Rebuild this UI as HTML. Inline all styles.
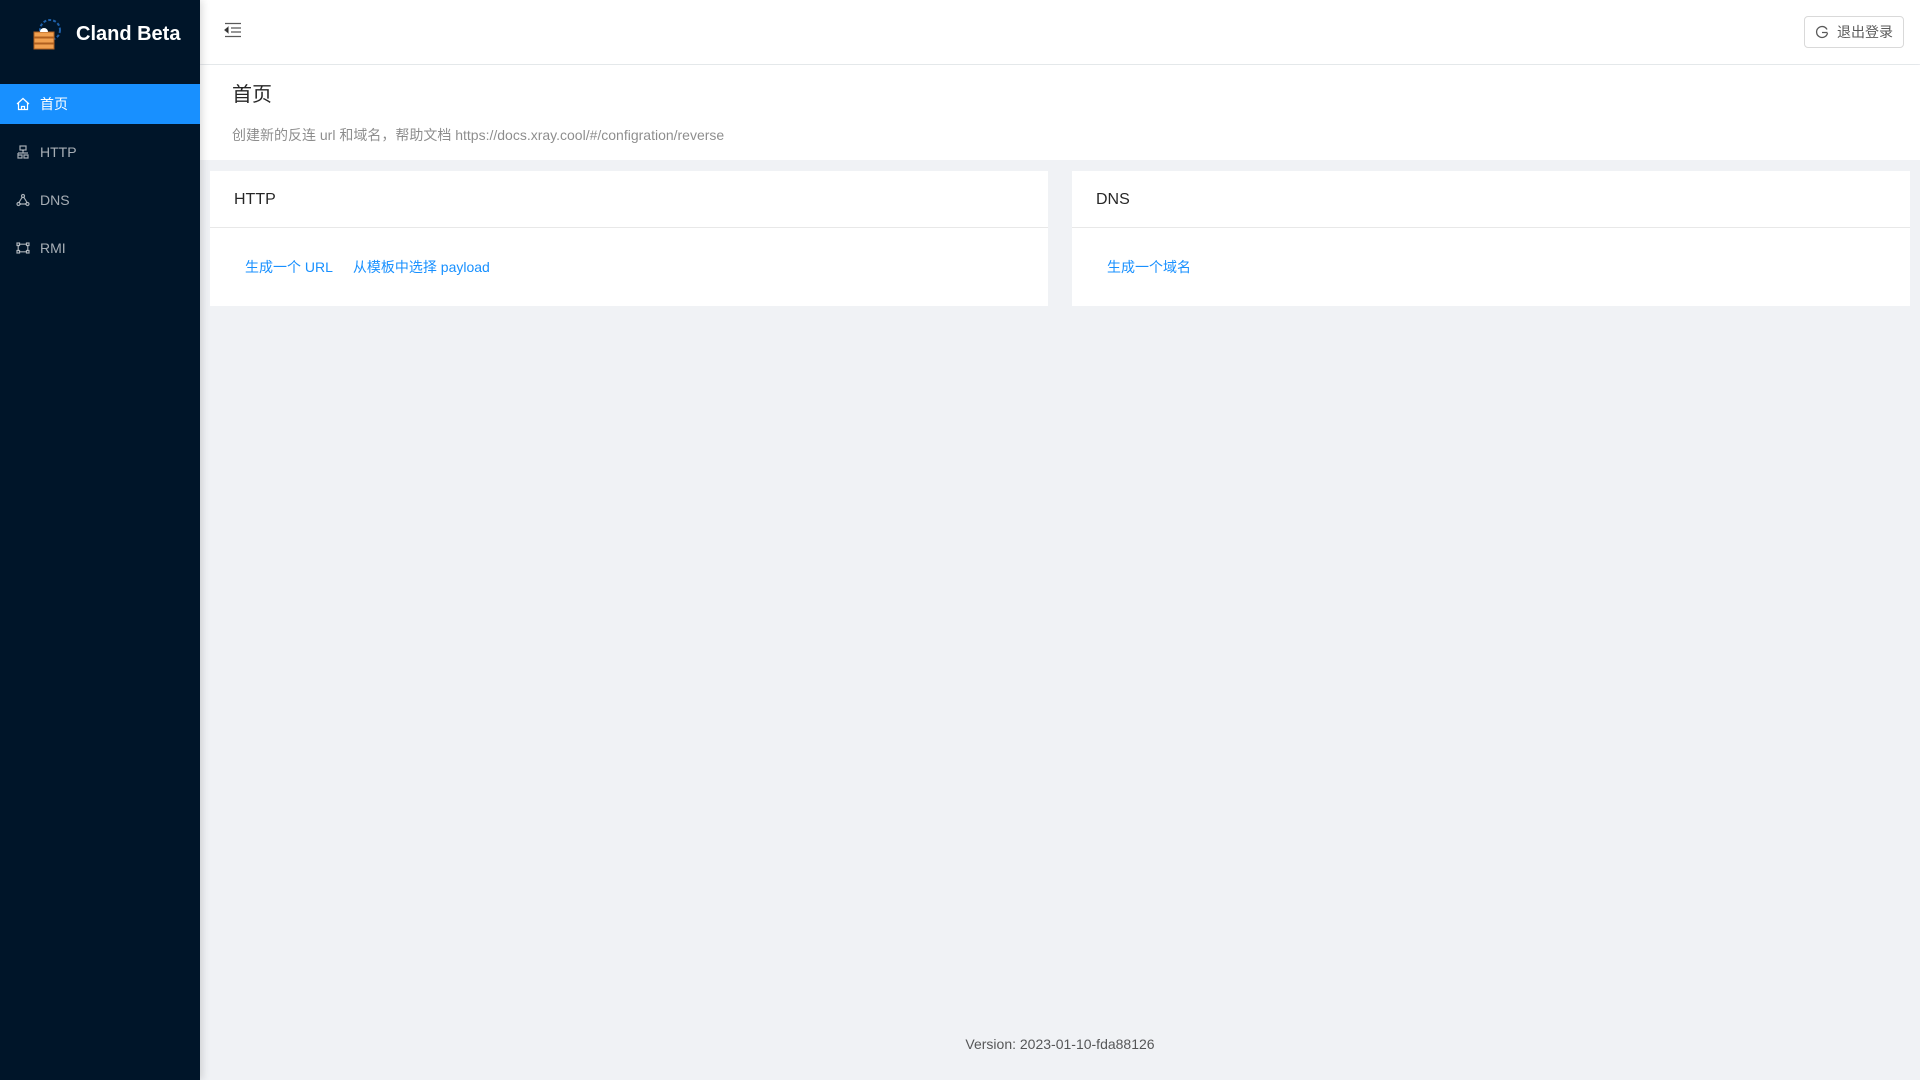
<!DOCTYPE html><html><head><meta charset="utf-8"><style>
*{box-sizing:border-box;margin:0;padding:0}
body{width:1920px;height:1080px;background:#f0f2f5;font-family:"Liberation Sans","Noto Sans CJK SC",sans-serif;font-size:14px;color:rgba(0,0,0,.85);position:relative;overflow:hidden}
.side{position:absolute;left:0;top:0;width:200px;height:1080px;background:#001529;box-shadow:2px 0 8px rgba(0,0,0,.15);z-index:2}
.logo{position:absolute;left:32px;top:17px;height:34px;display:flex;align-items:center}
.logo span{color:#fff;font-weight:bold;font-size:20px;margin-left:12px}
.mi{position:absolute;left:0;width:200px;height:40px;display:flex;align-items:center;padding-left:16px;color:rgba(255,255,255,.65);font-size:14px}
.mi svg{margin-right:10px}
.mi.a{background:#1890ff;color:#fff}
.hdr{position:absolute;left:200px;top:0;right:0;height:64px;background:#fff;box-shadow:0 1px 4px rgba(0,21,41,.08)}
.btn{position:absolute;right:16px;top:16px;width:100px;height:32px;border:1px solid #d9d9d9;border-radius:4px;display:flex;align-items:center;justify-content:center;color:rgba(0,0,0,.65);font-size:14px;background:#fff}
.ph{position:absolute;left:200px;top:65px;right:0;height:95px;background:#fff;padding:16px 32px}
.ph h1{font-size:20px;font-weight:normal;line-height:28px;margin-top:0}
.ph p{color:rgba(0,0,0,.45);margin-top:15px;line-height:22px}
.card{position:absolute;top:171px;width:838px;height:135px;background:#fff}
.card .t{height:57px;border-bottom:1px solid #e8e8e8;padding:0 24px;line-height:58px;font-size:16px}
.card .b{padding:0 35px;line-height:78px;color:#1890ff}
.card .b a{margin-right:20px}
.ft{position:absolute;left:200px;right:0;top:1036px;text-align:center;color:rgba(0,0,0,.65)}
</style></head><body>
<div class="side">
<div class="logo"><svg width="32" height="34" viewBox="0 0 32 34"><circle cx="18" cy="13" r="10" fill="none" stroke="#1e5fa8" stroke-width="2" stroke-dasharray="3 2"/><rect x="2" y="15" width="20" height="5" fill="#f0a050" stroke="#b06020"/><rect x="2" y="21" width="20" height="5" fill="#f0a050" stroke="#b06020"/><rect x="2" y="27" width="20" height="5" fill="#f0a050" stroke="#b06020"/><path d="M8 15a4 4 0 0 1 8 0" fill="#fff"/></svg><span>Cland Beta</span></div>
<div class="mi a" style="top:84px"><svg width="14" height="14" viewBox="0 0 14 14" fill="none" stroke="#fff" stroke-width="1.2"><path d="M1 7L7 1.5 13 7M2.5 6v6.5h9V6M5.5 12.5v-3h3v3"/></svg>首页</div>
<div class="mi" style="top:132px"><svg width="14" height="14" viewBox="0 0 14 14" fill="none" stroke="currentColor" stroke-width="1.2"><rect x="4" y="1" width="6" height="4"/><path d="M7 5v3M2 8h10M2 8v5h4V10H2M8 10h4v3H8z"/></svg>HTTP</div>
<div class="mi" style="top:180px"><svg width="14" height="14" viewBox="0 0 14 14" fill="none" stroke="currentColor" stroke-width="1.2"><circle cx="7" cy="3" r="1.5"/><circle cx="2.5" cy="11" r="1.5"/><circle cx="11.5" cy="11" r="1.5"/><path d="M6 4.5l-3 5M8 4.5l3 5M4 11h6"/></svg>DNS</div>
<div class="mi" style="top:228px"><svg width="14" height="14" viewBox="0 0 14 14" fill="none" stroke="currentColor" stroke-width="1.2"><rect x="1" y="2" width="2.5" height="2.5"/><rect x="10.5" y="2" width="2.5" height="2.5"/><rect x="1" y="9.5" width="2.5" height="2.5"/><rect x="10.5" y="9.5" width="2.5" height="2.5"/><path d="M3.5 3.2h7M3.5 10.8h7M2.2 4.5v5M11.8 4.5v5"/></svg>RMI</div>
</div>
<div class="hdr"><svg style="position:absolute;left:24px;top:22px" width="18" height="16" viewBox="0 0 18 16" fill="none" stroke="rgba(0,0,0,.65)" stroke-width="1.3"><path d="M1 1.5h16M7 6h10M7 10h10M1 14.5h16"/><path d="M4 5.5L1 8l3 2.5z" fill="rgba(0,0,0,.65)"/></svg>
<div class="btn"><svg width="14" height="14" viewBox="0 0 14 14" fill="none" stroke="rgba(0,0,0,.65)" stroke-width="1.3" style="margin-right:8px"><path d="M12 4.5A5.5 5.5 0 1 0 12.5 8M7 7.5h5.5"/></svg>退出登录</div></div>
<div class="ph"><h1>首页</h1><p>创建新的反连 url 和域名，帮助文档 https://docs.xray.cool/#/configration/reverse</p></div>
<div class="card" style="left:210px"><div class="t">HTTP</div><div class="b"><a>生成一个 URL</a><a>从模板中选择 payload</a></div></div>
<div class="card" style="left:1072px"><div class="t">DNS</div><div class="b"><a>生成一个域名</a></div></div>
<div class="ft">Version: 2023-01-10-fda88126</div>
</body></html>
